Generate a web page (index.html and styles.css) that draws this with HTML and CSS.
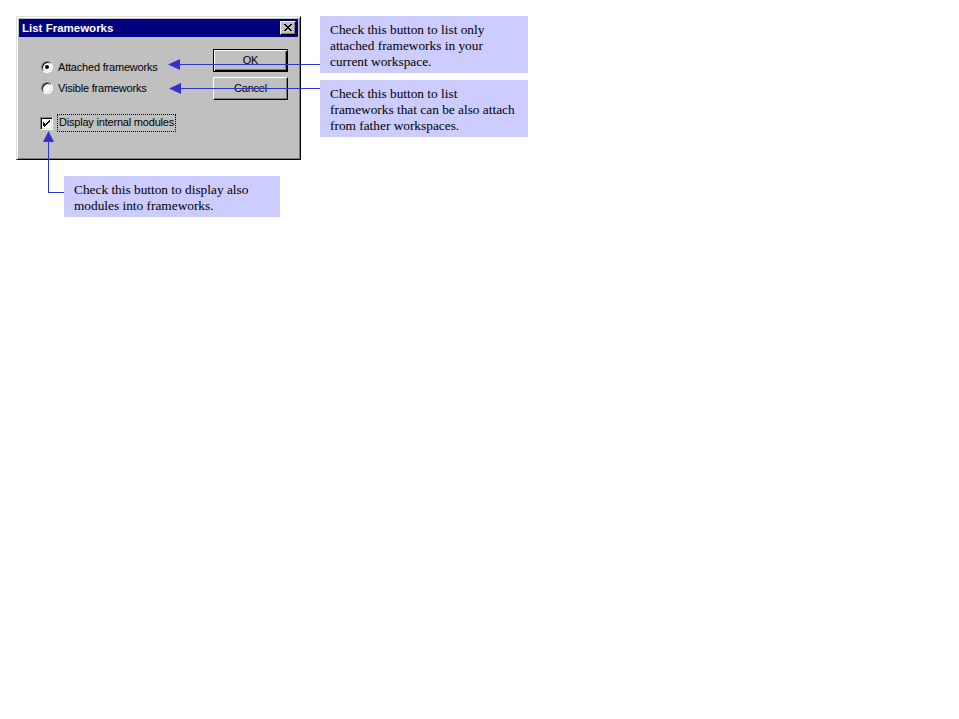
FILE: index.html
```html
<!DOCTYPE html>
<html>
<head>
<meta charset="utf-8">
<title>List Frameworks</title>
<link rel="stylesheet" href="styles.css">
</head>
<body>
<div class="canvas">
  <div class="top">
    <div class="dialog">
      <div class="titlebar">
        <span class="title">List Frameworks</span>
        <span class="close"><svg width="8" height="7" viewBox="0 0 8 7"><path d="M0 0h2v1h1v1h2V1h1V0h2v1H7v1H6v1H5v1h1v1h1v1h1v1H6V6H5V5H3v1H2v1H0V6h1V5h1V4h1V3H2V2H1V1H0z" fill="#000"/></svg></span>
      </div>
      <div class="content">
        <div class="options">
          <div class="row"><span class="radio checked"></span><span class="label">Attached frameworks</span></div>
          <div class="row"><span class="radio"></span><span class="label">Visible frameworks</span></div>
          <div class="row check-row"><span class="checkbox"><svg width="7" height="7" viewBox="0 0 7 7"><path d="M6 0h1v2H6v1H5v1H4v1H3v1H2v1H1V6H0V2h1v1h1v1h1V3h1V2h1V1h1z" fill="#000"/></svg></span><span class="label focus">Display internal modules</span></div>
        </div>
        <div class="buttons">
          <div class="btn default"><span>OK</span></div>
          <div class="btn"><span>Cancel</span></div>
        </div>
      </div>
    </div>
    <div class="callouts">
      <div class="note">Check this button to list only attached frameworks in your current workspace.</div>
      <div class="note">Check this button to list frameworks that can be also attach from father workspaces.</div>
    </div>
  </div>
  <div class="note note-bottom">Check this button to display also modules into frameworks.</div>
  <svg class="arrows" width="959" height="719" viewBox="0 0 959 719">
    <g fill="#3232cc" stroke="none">
      <rect x="178" y="64" width="142" height="1"/>
      <polygon points="168,64.5 180,59 180,70"/>
      <rect x="179" y="88" width="141" height="1"/>
      <polygon points="169,88.5 181,83 181,94"/>
      <rect x="48" y="140" width="1" height="53"/>
      <rect x="48" y="192" width="16" height="1"/>
      <polygon points="48.5,131 43,142 54,142"/>
    </g>
  </svg>
</div>
</body>
</html>
```

FILE: styles.css
```css
html, body {
  margin: 0;
  padding: 0;
  background: #ffffff;
}

.canvas {
  position: relative;
  width: 959px;
  height: 719px;
  padding: 16px 0 0 16px;
  box-sizing: border-box;
  font-family: "Liberation Sans", Arial, sans-serif;
  font-size: 11px;
  color: #000;
}

.top {
  display: flex;
  align-items: flex-start;
  gap: 19px;
}

/* Win95 dialog */
.dialog {
  width: 285px;
  height: 144px;
  box-sizing: border-box;
  background: #c0c0c0;
  border: 1px solid;
  border-color: #dfdfdf #000 #000 #dfdfdf;
  box-shadow: inset 1px 1px 0 #fff, inset -1px -1px 0 #808080;
  padding: 2px;
  display: flex;
  flex-direction: column;
}

.titlebar {
  height: 18px;
  background: #000080;
  display: flex;
  align-items: center;
  justify-content: space-between;
  padding: 0 2px 0 3px;
}

.title {
  color: #fff;
  font-weight: bold;
  font-size: 11.5px;
  line-height: 14px;
}

.close {
  width: 16px;
  height: 14px;
  box-sizing: border-box;
  background: #c0c0c0;
  border: 1px solid;
  border-color: #fff #000 #000 #fff;
  box-shadow: inset -1px -1px 0 #808080;
  display: flex;
  align-items: center;
  justify-content: center;
  padding: 0 1px 1px 0;
}

.close svg { display: block; }

.content {
  flex: 1;
  display: flex;
  letter-spacing: -0.2px;
}

.options {
  padding: 22px 0 0 22px;
  display: flex;
  flex-direction: column;
}

.row {
  height: 16px;
  display: flex;
  align-items: center;
  gap: 5px;
  margin-bottom: 5px;
}

.check-row {
  margin-top: 14px;
  margin-left: -1px;
  gap: 4px;
}

.label {
  line-height: 13px;
  white-space: nowrap;
}

.radio {
  position: relative;
  width: 12px;
  height: 12px;
  box-sizing: border-box;
  border-radius: 50%;
  background: #fff;
  border: 1px solid;
  border-color: #808080 #fff #fff #808080;
  box-shadow: inset 1px 1px 0 #000, inset -1px -1px 0 #dfdfdf;
  flex: none;
}

.radio.checked::after {
  content: "";
  position: absolute;
  left: 3px;
  top: 3px;
  width: 4px;
  height: 4px;
  border-radius: 50%;
  background: #000;
}

.checkbox {
  width: 13px;
  height: 13px;
  box-sizing: border-box;
  background: #fff;
  border: 1px solid;
  border-color: #808080 #fff #fff #808080;
  box-shadow: inset 1px 1px 0 #000, inset -1px -1px 0 #dfdfdf;
  display: flex;
  align-items: center;
  justify-content: center;
  flex: none;
}

.checkbox svg { display: block; }

.focus {
  border: 1px dotted #000;
  padding: 1px 1px 2px 1px;
}

.buttons {
  margin-left: auto;
  padding: 12px 10px 0 0;
  display: flex;
  flex-direction: column;
  gap: 5px;
}

.btn {
  width: 75px;
  height: 23px;
  box-sizing: border-box;
  background: #c0c0c0;
  border: 1px solid;
  border-color: #fff #000 #000 #fff;
  box-shadow: inset -1px -1px 0 #808080;
  display: flex;
  align-items: center;
  justify-content: center;
  padding-bottom: 1px;
}

.btn.default {
  border: 1px solid #000;
  box-shadow: inset 1px 1px 0 #fff, inset -1px -1px 0 #000, inset -2px -2px 0 #808080;
}

/* Callouts */
.callouts {
  display: flex;
  flex-direction: column;
  gap: 7px;
}

.note {
  width: 208px;
  box-sizing: border-box;
  background: #ccccff;
  font-family: "Liberation Serif", "Times New Roman", serif;
  font-size: 13.33px;
  line-height: 16px;
  padding: 6px 8px 3px 10px;
  color: #000;
}

.note-bottom {
  width: 216px;
  margin: 16px 0 0 48px;
}

.arrows {
  position: absolute;
  left: 0;
  top: 0;
  pointer-events: none;
}
```
